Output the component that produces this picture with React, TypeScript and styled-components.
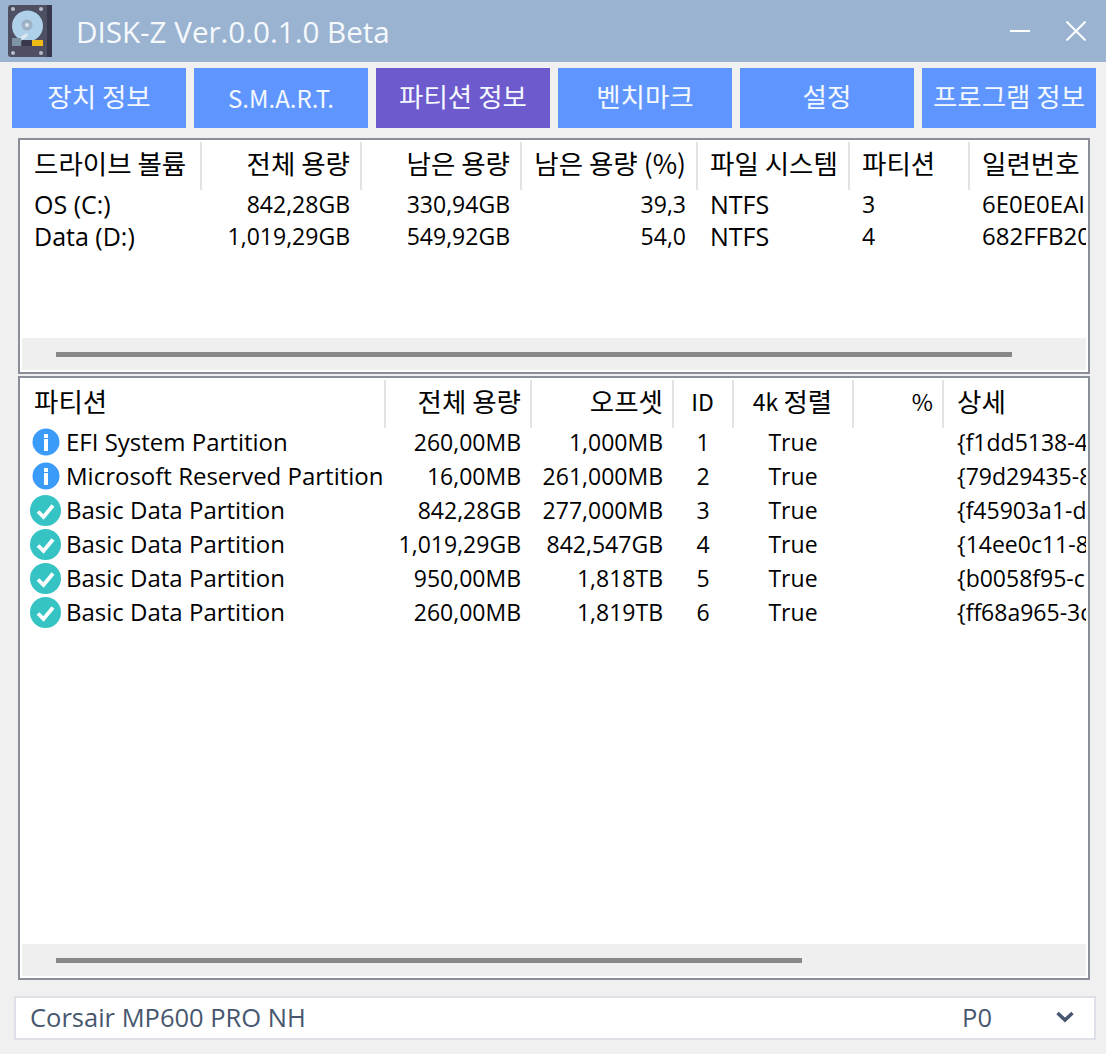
import React from "react";
import styled, { createGlobalStyle } from "styled-components";

const GlobalStyle = createGlobalStyle`
  html, body {
    margin: 0;
    padding: 0;
    background: #f0f0f0;
  }
  * {
    box-sizing: border-box;
  }
`;

const FONT = `"Noto Sans CJK KR", "Noto Sans", sans-serif`;

const Window = styled.div`
  width: 1106px;
  height: 1054px;
  background: #f0f0f0;
  font-family: ${FONT};
  overflow: hidden;
  display: flex;
  flex-direction: column;
`;

const TitleBar = styled.div`
  height: 62px;
  background: #9ab3d1;
  display: flex;
  align-items: center;
  padding: 0 20px 0 8px;
  flex: none;
`;

const TitleText = styled.div`
  margin-left: 24px;
  flex: 1;
  color: #f6f9fc;
  font-family: "Open Sans", sans-serif;
  font-size: 29.6px;
  line-height: 38px;
  padding-top: 1px;
`;

const WinButtons = styled.div`
  display: flex;
  align-items: center;
  gap: 36px;
  padding-bottom: 1px;
`;

const TabRow = styled.div`
  display: flex;
  gap: 8px;
  padding: 6px 10px 0 12px;
  flex: none;
`;

const Tab = styled.div<{ $active?: boolean; $latin?: boolean }>`
  width: 174px;
  height: 60px;
  background: ${(p) => (p.$active ? "#6d5acd" : "#5f95ff")};
  color: #f4f8ff;
  font-size: ${(p) => (p.$latin ? "24px" : "26.5px")};
  display: flex;
  align-items: center;
  justify-content: center;
  white-space: nowrap;
  padding-bottom: ${(p) => (p.$latin ? "1px" : "5px")};
`;

const Panels = styled.div`
  display: flex;
  flex-direction: column;
  gap: 2px;
  padding: 10px 16px 0 18px;
  flex: none;
`;

const Panel = styled.div<{ $height: number }>`
  height: ${(p) => p.$height}px;
  border: 2px solid #8a8e99;
  background: #fff;
  display: flex;
  flex-direction: column;
  overflow: hidden;
`;

const TableArea = styled.div`
  flex: 1;
  padding: 2px 2px 0 0;
  overflow: hidden;
  color: #000;
  font-family: ${FONT};
`;

const GridRow = styled.div<{ $cols: string; $height: number }>`
  display: grid;
  grid-template-columns: ${(p) => p.$cols};
  height: ${(p) => p.$height}px;
  align-items: center;
  width: 1066px;
`;

const HeadRow = styled(GridRow)`
  align-items: start;
`;

const HeadCell = styled.div<{ $align?: "left" | "right" | "center"; $shift: number }>`
  height: 48px;
  line-height: 41px;
  font-size: 26.5px;
  white-space: nowrap;
  overflow: hidden;
  border-right: 2px solid #e3e3e3;
  margin-right: -${(p) => p.$shift}px;
  text-align: ${(p) => p.$align ?? "left"};
  padding: ${(p) =>
    p.$align === "right"
      ? `0 ${8 + p.$shift}px 0 0`
      : p.$align === "center"
        ? "0"
        : "0 0 0 14px"};
  &:last-child {
    border-right: none;
  }
`;

// latin letters sit narrower than hangul in the header font
const HeadLatin = styled.span`
  font-size: 23px;
  vertical-align: 1px;
`;

const Cell = styled.div<{ $right?: boolean; $center?: boolean; $size?: number }>`
  font-family: "Open Sans", ${FONT};
  font-size: ${(p) => p.$size ?? 23}px;
  line-height: 32px;
  white-space: nowrap;
  overflow: hidden;
  text-align: ${(p) => (p.$center ? "center" : p.$right ? "right" : "left")};
  padding: ${(p) => (p.$center ? "0" : p.$right ? "0 10px 0 0" : "0 0 0 14px")};
`;

const NameCell = styled(Cell)`
  display: flex;
  align-items: center;
  gap: 6px;
  padding-left: 12px;
  font-size: 24px;
  overflow: visible;
`;

const ScrollTrack = styled.div`
  height: 32px;
  margin: 0 2px 2px 2px;
  background: #efefef;
  display: flex;
  align-items: center;
  padding-left: 34px;
  flex: none;
`;

const ScrollThumb = styled.div<{ $width: number }>`
  width: ${(p) => p.$width}px;
  height: 5px;
  background: #888;
`;

const ComboBox = styled.div`
  margin: 16px 10px 0 14px;
  height: 44px;
  border: 2px solid #dde1e7;
  background: #fff;
  display: flex;
  align-items: center;
  padding: 0 20px 2px 14px;
  color: #47576f;
  font-family: "Open Sans", sans-serif;
  font-size: 25.5px;
  flex: none;
`;

const ComboName = styled.div`
  flex: 1;
`;

const ComboPort = styled.div`
  margin-right: 64px;
`;

const HEAD_TOP: { label: React.ReactNode; align?: "right" }[] = [
  { label: "드라이브 볼륨" },
  { label: "전체 용량", align: "right" },
  { label: "남은 용량", align: "right" },
  { label: "남은 용량 (%)", align: "right" },
  { label: "파일 시스템" },
  { label: "파티션" },
  { label: "일련번호" },
];

const ROWS_TOP = [
  ["OS (C:)", "842,28GB", "330,94GB", "39,3", "NTFS", "3", "6E0E0EAI"],
  ["Data (D:)", "1,019,29GB", "549,92GB", "54,0", "NTFS", "4", "682FFB20"],
];

// font size per column of the upper table
const TOP_SIZES = [25, 23, 23, 23, 25, 23, 24];

const TOP_COLS = "180px 160px 160px 176px 152px 120px 118px";

const HEAD_BOTTOM: { label: React.ReactNode; align?: "right" | "center" }[] = [
  { label: "파티션" },
  { label: "전체 용량", align: "right" },
  { label: "오프셋", align: "right" },
  { label: <HeadLatin>ID</HeadLatin>, align: "center" },
  { label: <><HeadLatin>4k </HeadLatin>정렬</>, align: "center" },
  { label: <HeadLatin>%</HeadLatin>, align: "right" },
  { label: "상세" },
];

const ROWS_BOTTOM = [
  { kind: "info", name: "EFI System Partition", size: "260,00MB", offset: "1,000MB", id: "1", guid: "{f1dd5138-4" },
  { kind: "info", name: "Microsoft Reserved Partition", size: "16,00MB", offset: "261,000MB", id: "2", guid: "{79d29435-8" },
  { kind: "ok", name: "Basic Data Partition", size: "842,28GB", offset: "277,000MB", id: "3", guid: "{f45903a1-d" },
  { kind: "ok", name: "Basic Data Partition", size: "1,019,29GB", offset: "842,547GB", id: "4", guid: "{14ee0c11-8" },
  { kind: "ok", name: "Basic Data Partition", size: "950,00MB", offset: "1,818TB", id: "5", guid: "{b0058f95-c" },
  { kind: "ok", name: "Basic Data Partition", size: "260,00MB", offset: "1,819TB", id: "6", guid: "{ff68a965-3c" },
];

const BOTTOM_COLS = "365px 146px 142px 60px 120px 90px 143px";

const DiskIcon = () => (
  <svg width="44" height="52" viewBox="0 0 44 52">
    <rect x="0" y="0" width="44" height="52" rx="3" fill="#4f4f63" />
    <rect x="39" y="0" width="5" height="52" fill="#38384c" />
    <circle cx="19.5" cy="21" r="15.5" fill="#aed0e8" />
    <circle cx="19" cy="20" r="5.5" fill="#9db1c4" />
    <circle cx="19" cy="20" r="2" fill="#dbe5ec" />
    <path d="M12 32 L19 28 L20 31 L14 35 Z" fill="#dce8ef" />
    <rect x="4" y="33" width="9" height="8" fill="#7d93a6" />
    <rect x="14" y="35" width="10" height="6" fill="#38384a" />
    <rect x="24" y="35" width="11" height="6" fill="#f1bb16" />
    <circle cx="5" cy="4" r="2" fill="#b9bdc6" />
    <circle cx="33" cy="4" r="2" fill="#b9bdc6" />
    <circle cx="5" cy="48" r="2" fill="#b9bdc6" />
    <circle cx="33" cy="48" r="2" fill="#b9bdc6" />
  </svg>
);

const InfoIcon = () => (
  <svg width="28" height="28" viewBox="0 0 28 28" style={{ flex: "none" }}>
    <circle cx="14" cy="14" r="13.5" fill="#3b9bf8" />
    <rect x="12" y="6" width="4" height="4" fill="#fff" />
    <rect x="12" y="11" width="4" height="12" fill="#fff" />
  </svg>
);

const OkIcon = () => (
  <svg width="31" height="31" viewBox="0 0 31 31" style={{ flex: "none", margin: "0 -1px 0 -2px" }}>
    <circle cx="15.5" cy="15.5" r="15.5" fill="#35c3c3" />
    <path d="M8 16.5 L13.5 22 L23 10.5" fill="none" stroke="#fff" strokeWidth="3.8" />
  </svg>
);

export default function App() {
  return (
    <Window>
      <GlobalStyle />
      <TitleBar>
        <DiskIcon />
        <TitleText>DISK-Z Ver.0.0.1.0 Beta</TitleText>
        <WinButtons>
          <svg width="20" height="4" viewBox="0 0 20 4">
            <rect x="0" y="1" width="20" height="2" fill="#fff" />
          </svg>
          <svg width="20" height="20" viewBox="0 0 20 20">
            <path d="M0.5 0.5 L19.5 19.5 M19.5 0.5 L0.5 19.5" stroke="#fff" strokeWidth="2" fill="none" />
          </svg>
        </WinButtons>
      </TitleBar>

      <TabRow>
        <Tab>장치 정보</Tab>
        <Tab $latin>S.M.A.R.T.</Tab>
        <Tab $active>파티션 정보</Tab>
        <Tab>벤치마크</Tab>
        <Tab>설정</Tab>
        <Tab>프로그램 정보</Tab>
      </TabRow>

      <Panels>
        <Panel $height={236}>
          <TableArea>
            <HeadRow $cols={TOP_COLS} $height={46}>
              {HEAD_TOP.map((h, i) => (
                <HeadCell key={i} $align={h.align} $shift={2}>{h.label}</HeadCell>
              ))}
            </HeadRow>
            {ROWS_TOP.map((row, i) => (
              <GridRow key={i} $cols={TOP_COLS} $height={32}>
                {row.map((v, j) => (
                  <Cell key={j} $right={j >= 1 && j <= 3} $size={TOP_SIZES[j]}>{v}</Cell>
                ))}
              </GridRow>
            ))}
          </TableArea>
          <ScrollTrack>
            <ScrollThumb $width={956} />
          </ScrollTrack>
        </Panel>
        <Panel $height={604}>
          <TableArea>
            <HeadRow $cols={BOTTOM_COLS} $height={45}>
              {HEAD_BOTTOM.map((h, i) => (
                <HeadCell key={i} $align={h.align} $shift={1}>{h.label}</HeadCell>
              ))}
            </HeadRow>
            {ROWS_BOTTOM.map((r, i) => (
              <GridRow key={i} $cols={BOTTOM_COLS} $height={34}>
                <NameCell>
                  {r.kind === "info" ? <InfoIcon /> : <OkIcon />}
                  {r.name}
                </NameCell>
                <Cell $right>{r.size}</Cell>
                <Cell $right>{r.offset}</Cell>
                <Cell $center>{r.id}</Cell>
                <Cell $center>True</Cell>
                <Cell $right />
                <Cell>{r.guid}</Cell>
              </GridRow>
            ))}
          </TableArea>
          <ScrollTrack>
            <ScrollThumb $width={746} />
          </ScrollTrack>
        </Panel>
      </Panels>

      <ComboBox>
        <ComboName>Corsair MP600 PRO NH</ComboName>
        <ComboPort>P0</ComboPort>
        <svg width="18" height="12" viewBox="0 0 18 12">
          <path d="M1.5 2 L9 9 L16.5 2" fill="none" stroke="#47576f" strokeWidth="3.5" />
        </svg>
      </ComboBox>
    </Window>
  );
}
